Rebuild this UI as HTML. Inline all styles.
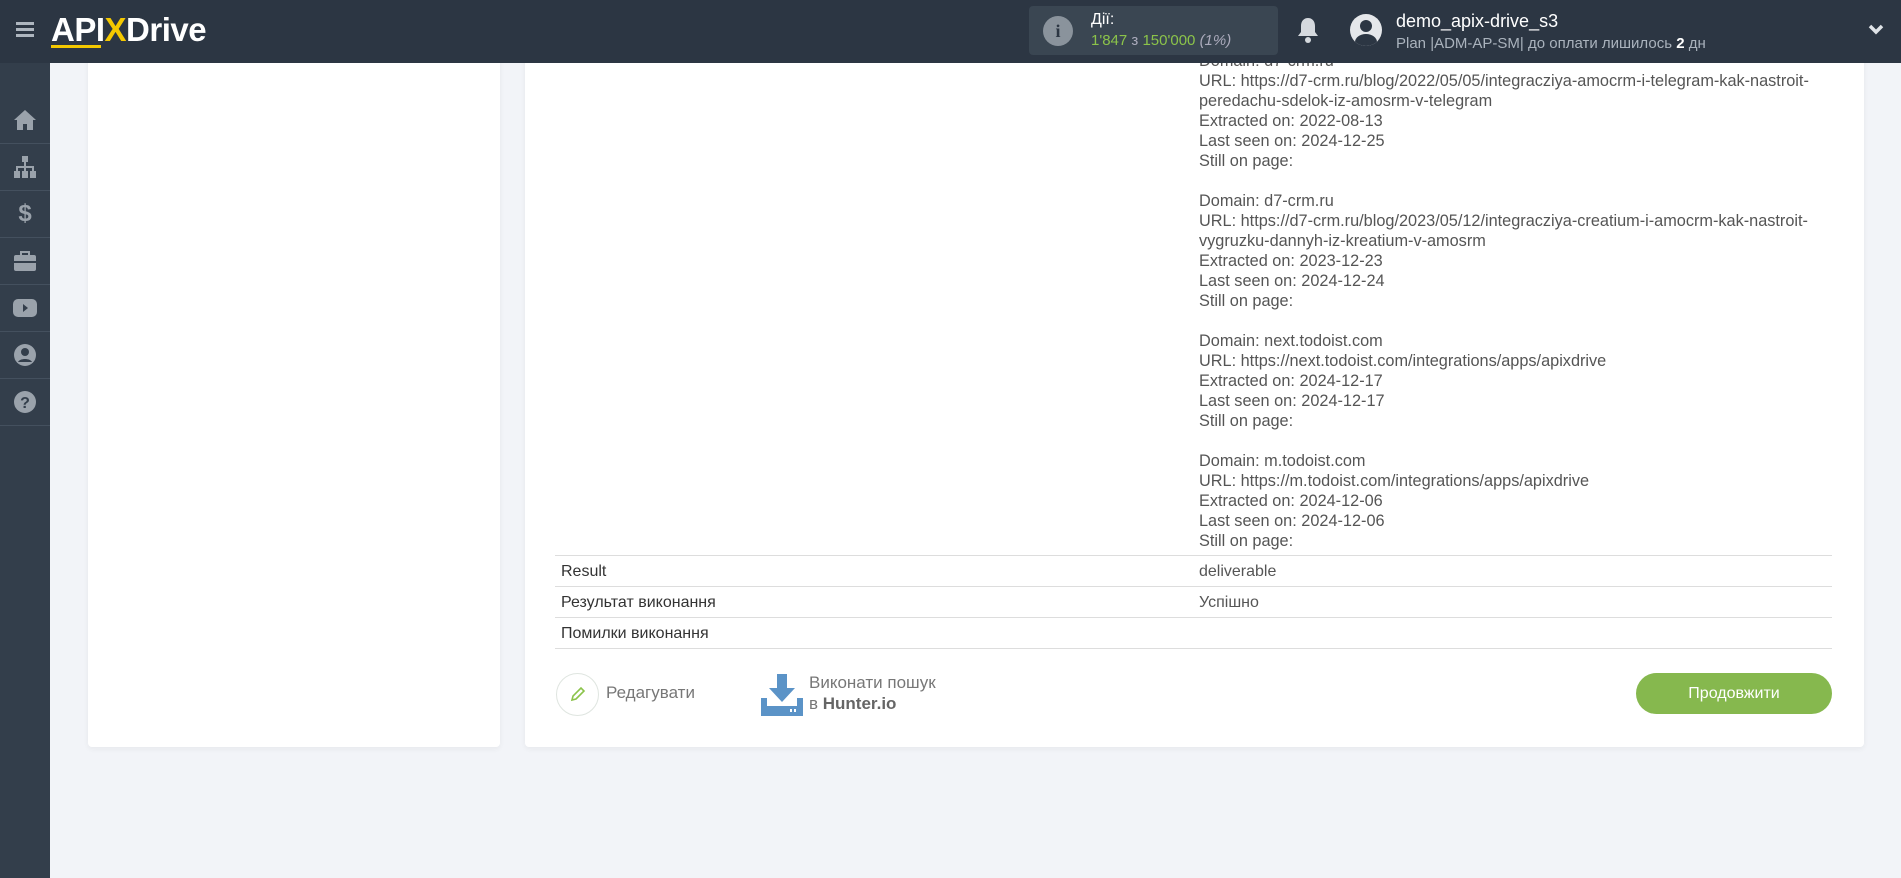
<!DOCTYPE html>
<html><head><meta charset="utf-8"><style>
*{margin:0;padding:0;box-sizing:border-box}
body{width:1901px;height:878px;overflow:hidden;background:#f2f4f8;font-family:"Liberation Sans",sans-serif;position:relative}
.hdr{position:absolute;left:0;top:0;width:1901px;height:63px;background:#2c3643;z-index:5}
.side{position:absolute;left:0;top:63px;width:50px;height:815px;background:#333e4b}
.side .it{position:absolute;left:0;width:50px;height:47px;border-bottom:1px solid #44505e;display:flex;align-items:center;justify-content:center}
.card{position:absolute;background:#fff;border-radius:4px;box-shadow:0 2px 6px rgba(0,0,0,.05)}
.txt{position:absolute;left:1199px;top:51px;font-size:16.3px;line-height:20px;color:#555}
.row{position:absolute;left:555px;width:1277px;height:31px;border-bottom:1px solid #ddd;font-size:16px;color:#333}
.row span{position:absolute;top:7px}
</style></head><body>
<div class="hdr">
 <div style="position:absolute;left:16px;top:22px;width:18px;height:3px;background:#aeb6bf;box-shadow:0 6px 0 #aeb6bf,0 12px 0 #aeb6bf"></div>
 <div style="position:absolute;left:51px;top:11px;font-size:33px;font-weight:bold;color:#fff;letter-spacing:-0.5px">API<span style="color:#f4c800">X</span>Drive</div>
 <div style="position:absolute;left:51px;top:45px;width:50px;height:3px;background:#f4c800"></div>
 <div style="position:absolute;left:1029px;top:6px;width:249px;height:49px;background:#3a4652;border-radius:4px">
  <div style="position:absolute;left:14px;top:10px;width:30px;height:30px;border-radius:50%;background:#8a939c;color:#2c3643;font-weight:bold;font-size:18px;text-align:center;line-height:30px;font-family:'Liberation Serif',serif">i</div>
  <div style="position:absolute;left:62px;top:5px;color:#fff;font-size:16px">Дії:</div>
  <div style="position:absolute;left:62px;top:26px;color:#8bc34a;font-size:15px">1'847 <span style="color:#aab">з</span> 150'000 <i style="color:#aab">(1%)</i></div>
 </div>
 <svg style="position:absolute;left:1297px;top:16px" width="22" height="28" viewBox="0 0 22 28"><path d="M11 2c-4 0-7 3-7 8v6l-3 4h20l-3-4v-6c0-5-3-8-7-8z" fill="#d5d9de"/><circle cx="11" cy="24" r="3" fill="#d5d9de"/></svg>
 <div style="position:absolute;left:1350px;top:14px;width:32px;height:32px;border-radius:50%;background:#e5e7ea;overflow:hidden"><div style="position:absolute;left:10px;top:6px;width:12px;height:12px;border-radius:50%;background:#2c3643"></div><div style="position:absolute;left:5px;top:20px;width:22px;height:16px;border-radius:50%;background:#2c3643"></div></div>
 <div style="position:absolute;left:1396px;top:11px;color:#fff;font-size:18px">demo_apix-drive_s3</div>
 <div style="position:absolute;left:1396px;top:35px;color:#aab3bd;font-size:15px">Plan |ADM-AP-SM| до оплати лишилось <b style="color:#fff">2</b> дн</div>
 <svg style="position:absolute;left:1868px;top:24px" width="16" height="12" viewBox="0 0 16 12"><path d="M2 2l6 6 6-6" stroke="#dfe3e7" stroke-width="3.5" fill="none"/></svg>
</div>
<div class="side">
 <div class="it" style="top:34px"><svg width="24" height="22" viewBox="0 0 24 22"><path d="M12 1L1 11h3v10h6v-6h4v6h6V11h3z" fill="#9aa2ab"/></svg></div>
 <div class="it" style="top:81px"><svg width="24" height="22" viewBox="0 0 24 22"><rect x="9" y="0" width="6" height="6" fill="#9aa2ab"/><path d="M12 6v5M4 16v-5h16v5M12 11v5" stroke="#9aa2ab" stroke-width="2" fill="none"/><rect x="1" y="15" width="6" height="7" fill="#9aa2ab"/><rect x="9" y="15" width="6" height="7" fill="#9aa2ab"/><rect x="17" y="15" width="6" height="7" fill="#9aa2ab"/></svg></div>
 <div class="it" style="top:128px;color:#9aa2ab;font-size:24px;font-weight:bold">$</div>
 <div class="it" style="top:175px"><svg width="24" height="20" viewBox="0 0 24 20"><path d="M8 4V1h8v3" stroke="#9aa2ab" stroke-width="2" fill="none"/><rect x="1" y="4" width="22" height="16" rx="2" fill="#9aa2ab"/><rect x="1" y="10" width="22" height="2" fill="#333e4b"/></svg></div>
 <div class="it" style="top:222px"><svg width="24" height="18" viewBox="0 0 24 18"><rect x="0" y="0" width="24" height="18" rx="5" fill="#9aa2ab"/><path d="M10 5l5 4-5 4z" fill="#333e4b"/></svg></div>
 <div class="it" style="top:269px"><svg width="24" height="24" viewBox="0 0 24 24"><circle cx="12" cy="12" r="11" fill="#9aa2ab"/><circle cx="12" cy="9" r="4" fill="#333e4b"/><path d="M5 19c2-4 12-4 14 0" fill="#333e4b"/></svg></div>
 <div class="it" style="top:316px"><svg width="24" height="24" viewBox="0 0 24 24"><circle cx="12" cy="12" r="11" fill="#9aa2ab"/><text x="12" y="18" text-anchor="middle" font-size="16" font-weight="bold" fill="#333e4b" font-family="Liberation Sans">?</text></svg></div>
</div>
<div class="card" style="left:88px;top:40px;width:412px;height:707px"></div>
<div class="card" style="left:525px;top:40px;width:1339px;height:707px"></div>
<div class="txt">Domain: d7-crm.ru<br>URL: https://d7-crm.ru/blog/2022/05/05/integracziya-amocrm-i-telegram-kak-nastroit-<br>peredachu-sdelok-iz-amosrm-v-telegram<br>Extracted on: 2022-08-13<br>Last seen on: 2024-12-25<br>Still on page:<br><br>Domain: d7-crm.ru<br>URL: https://d7-crm.ru/blog/2023/05/12/integracziya-creatium-i-amocrm-kak-nastroit-<br>vygruzku-dannyh-iz-kreatium-v-amosrm<br>Extracted on: 2023-12-23<br>Last seen on: 2024-12-24<br>Still on page:<br><br>Domain: next.todoist.com<br>URL: https://next.todoist.com/integrations/apps/apixdrive<br>Extracted on: 2024-12-17<br>Last seen on: 2024-12-17<br>Still on page:<br><br>Domain: m.todoist.com<br>URL: https://m.todoist.com/integrations/apps/apixdrive<br>Extracted on: 2024-12-06<br>Last seen on: 2024-12-06<br>Still on page:</div>
<div style="position:absolute;left:555px;top:555px;width:1277px;border-top:1px solid #ddd"></div>
<div class="row" style="top:556px"><span style="left:6px">Result</span><span style="left:644px;color:#555">deliverable</span></div>
<div class="row" style="top:587px"><span style="left:6px">Результат виконання</span><span style="left:644px;color:#555">Успішно</span></div>
<div class="row" style="top:618px"><span style="left:6px">Помилки виконання</span></div>
<div style="position:absolute;left:556px;top:673px;width:43px;height:43px;border-radius:50%;border:1px solid #dfe5e0"><svg style="position:absolute;left:12px;top:11px" width="18" height="18" viewBox="0 0 18 18"><path d="M3 15l1-4 8-8 3 3-8 8z" stroke="#8bc34a" stroke-width="1.6" fill="none"/></svg></div>
<div style="position:absolute;left:606px;top:683px;font-size:17px;color:#777">Редагувати</div>
<svg style="position:absolute;left:761px;top:674px" width="42" height="42" viewBox="0 0 42 42"><path d="M16 0h10v14h8L21 28 8 14h8z" fill="#5b93c7"/><path d="M0 24h6v8h30v-8h6v18H0z" fill="#5b93c7"/><rect x="29" y="35" width="2" height="3" fill="#fff"/><rect x="33" y="35" width="2" height="3" fill="#fff"/></svg>
<div style="position:absolute;left:809px;top:672px;font-size:17px;color:#777;line-height:21px">Виконати пошук<br>в <b style="color:#666">Hunter.io</b></div>
<div style="position:absolute;left:1636px;top:673px;width:196px;height:41px;border-radius:21px;background:#86b84e;color:#fff;font-size:16px;text-align:center;line-height:41px">Продовжити</div>
</body></html>
